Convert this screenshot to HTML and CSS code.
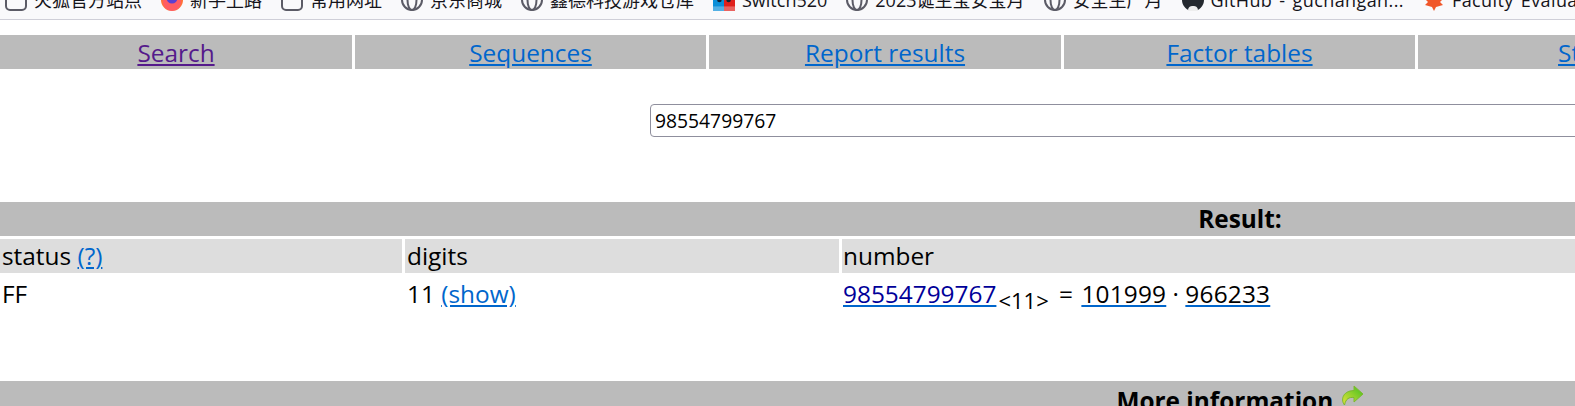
FILE: index.html

```html
<!DOCTYPE html>
<html>

<head>
  <title>factordb</title>
  <link rel="stylesheet" href="styles.css">
</head>

<body>
  <!-- bookmarks toolbar -->
  <div class="bookmarks">
    <span class="mark">
      <svg class="icon" viewBox="0 0 22 22"><rect x="1" y="1" width="20" height="20" rx="4" fill="none" stroke="#5b5b66" stroke-width="2"/></svg>
      <span>火狐官方站点</span>
    </span>
    <span class="mark">
      <svg class="icon" viewBox="0 0 22 22"><circle cx="11" cy="11" r="11" fill="#ff7139"/><circle cx="11" cy="13" r="9" fill="#ff4f7e" opacity=".6"/><circle cx="11" cy="9" r="5.5" fill="#5a3fd0"/></svg>
      <span>新手上路</span>
    </span>
    <span class="mark">
      <svg class="icon" viewBox="0 0 22 22"><rect x="1" y="1" width="20" height="20" rx="4" fill="none" stroke="#5b5b66" stroke-width="2"/></svg>
      <span>常用网址</span>
    </span>
    <span class="mark">
      <svg class="icon" viewBox="0 0 22 22"><use href="#globe"/></svg>
      <span>京东商城</span>
    </span>
    <span class="mark">
      <svg class="icon" viewBox="0 0 22 22"><use href="#globe"/></svg>
      <span>鑫德科技游戏仓库</span>
    </span>
    <span class="mark">
      <svg class="icon" viewBox="0 0 24 24"><rect width="12" height="24" fill="#0a8fd8"/><rect x="12" width="12" height="24" fill="#e0201c"/><rect y="19" width="24" height="5" fill="#fff" opacity=".3"/><circle cx="7" cy="12" r="2.500" fill="#123"/><circle cx="17" cy="12" r="2.500" fill="#123"/></svg>
      <span>Switch520</span>
    </span>
    <span class="mark">
      <svg class="icon" viewBox="0 0 22 22"><use href="#globe"/></svg>
      <span>2023诞生宝安宝月</span>
    </span>
    <span class="mark">
      <svg class="icon" viewBox="0 0 22 22"><use href="#globe"/></svg>
      <span>安全生产月</span>
    </span>
    <span class="mark">
      <svg class="icon" viewBox="0 0 22 22"><circle cx="11" cy="11" r="11" fill="#24292f"/><path d="M6 22c0-4 2-5 5-5s5 1 5 5z" fill="#eee"/></svg>
      <span class="latin">GitHub - guchangan...</span>
    </span>
    <span class="mark">
      <svg class="icon" viewBox="0 0 22 22"><path d="M11 22l2-4 7-2-3-3 5-5-6 1-5-9-5 9-6-1 5 5-3 3 7 2z" fill="#f0572a"/></svg>
      <span class="latin">Faculty Evaluat</span>
    </span>
  </div>

  <svg class="defs">
    <symbol id="globe" viewBox="0 0 22 22">
      <g fill="none" stroke="#5b5b66" stroke-width="2">
        <circle cx="11" cy="11" r="10"/>
        <ellipse cx="11" cy="11" rx="4.500" ry="10"/>
      </g>
    </symbol>
  </svg>

  <div class="page">
    <div class="nav">
      <div class="nav-cell"><a class="visited" href="#">Search</a></div>
      <div class="nav-cell"><a href="#">Sequences</a></div>
      <div class="nav-cell"><a href="#">Report results</a></div>
      <div class="nav-cell"><a href="#">Factor tables</a></div>
      <div class="nav-cell"><a href="#">Status</a></div>
      <div class="nav-cell"><a href="#">Downloads</a></div>
      <div class="nav-cell"><a href="#">Login</a></div>
    </div>

    <form class="search-form">
      <input class="search-input" type="text" value="98554799767">
    </form>

    <div class="bar">Result:</div>

    <div class="result-grid">
      <div class="head-cell">status <a href="#">(?)</a></div>
      <div class="head-cell">digits</div>
      <div class="head-cell">number</div>
      <div class="data-cell">FF</div>
      <div class="data-cell">11 <a href="#">(show)</a></div>
      <div class="data-cell"><a href="#"><span class="num-main">98554799767</span></a><sub>&lt;11&gt;</sub> <span class="eq">=</span> <a href="#"><span class="num-fac">101999</span></a> · <a href="#"><span class="num-fac">966233</span></a></div>
    </div>

    <div class="bar more">
      More information
      <svg class="arrow" viewBox="0 0 24 21">
        <defs>
          <linearGradient id="green" x1="0" y1="1" x2="1" y2="0">
            <stop offset="0" stop-color="#e4e43a"/>
            <stop offset="1" stop-color="#3fbe1f"/>
          </linearGradient>
        </defs>
        <path d="M14 1l9 8-9 8v-4.500c-5-.5-8 1-9.500 7.500C1 16 1.500 6 14 5.500z" fill="url(#green)" stroke="#7cb82f" stroke-width="1"/>
      </svg>
    </div>
  </div>
</body>
</html>
```

FILE: styles.css

```css
html {
  overflow: hidden;
}

body {
  margin: 0;
  font-family: "Open Sans", "Noto Sans", sans-serif;
  font-size: 24.4px;
  color: #000;
  background-color: #fff;
}

a {
  color: #0066cc;
}

a.visited {
  color: #551a8b;
}

/* browser toolbar, cut off at the top */
.bookmarks {
  display: flex;
  align-items: flex-end;
  gap: 19px;
  height: 19px;
  padding-left: 5px;
  overflow: hidden;
  white-space: nowrap;
  word-spacing: 2px;
  background-color: #f9f9fb;
  border-bottom: 1px solid #cfcfd8;
  font-family: "Open Sans", "Noto Sans CJK SC", sans-serif;
  font-size: 18px;
  line-height: 26px;
  color: #15141a;
}

.mark {
  display: flex;
  align-items: center;
  flex-shrink: 0;
  gap: 7px;
  height: 28px;
  margin-bottom: 5px;
}

.latin {
  letter-spacing: 0.4px;
}

.icon {
  width: 22px;
  height: 22px;
}

.defs {
  display: none;
}

.page {
  width: 2480px;
}

.nav {
  display: grid;
  grid-template-columns: 352px 351px 352px 351px repeat(3, 351px);
  gap: 3px;
  margin-top: 15px;
}

.nav-cell {
  height: 34px;
  line-height: 36px;
  text-align: center;
  background-color: #bbbbbb;
}

.search-form {
  margin-top: 35px;
}

.search-input {
  display: block;
  box-sizing: border-box;
  width: 1180px;
  height: 33px;
  margin: 0 auto;
  padding: 0 4px;
  border: 1px solid #8f8f9d;
  border-radius: 4px;
  font-family: "Open Sans", sans-serif;
  font-size: 19.3px;
  color: #000;
}

.bar {
  height: 34px;
  margin-top: 65px;
  line-height: 34px;
  text-align: center;
  font-weight: bold;
  background-color: #bbbbbb;
}

.more {
  height: 40px;
  margin-top: 0;
  padding-top: 3px;
}

.arrow {
  width: 24px;
  height: 21px;
  vertical-align: 4px;
}

.result-grid {
  display: grid;
  grid-template-columns: 402px 434px 1fr;
  grid-template-rows: 34px 1fr;
  column-gap: 3px;
  height: 142px;
  margin-top: 3px;
}

.head-cell {
  padding-left: 2px;
  line-height: 34px;
  background-color: #dddddd;
}

.data-cell {
  margin-top: 4px;
  padding-left: 2px;
  line-height: 34px;
}

.data-cell:last-child,
.head-cell:nth-child(3) {
  padding-left: 1px;
}

.num-main {
  color: #000099;
}

.num-fac {
  color: #000;
  letter-spacing: 0.2px;
}

.eq {
  margin: 0 2px;
}

sub {
  margin: 0 2px;
  font-size: 22px;
  line-height: 0;
  vertical-align: -6px;
}
```
